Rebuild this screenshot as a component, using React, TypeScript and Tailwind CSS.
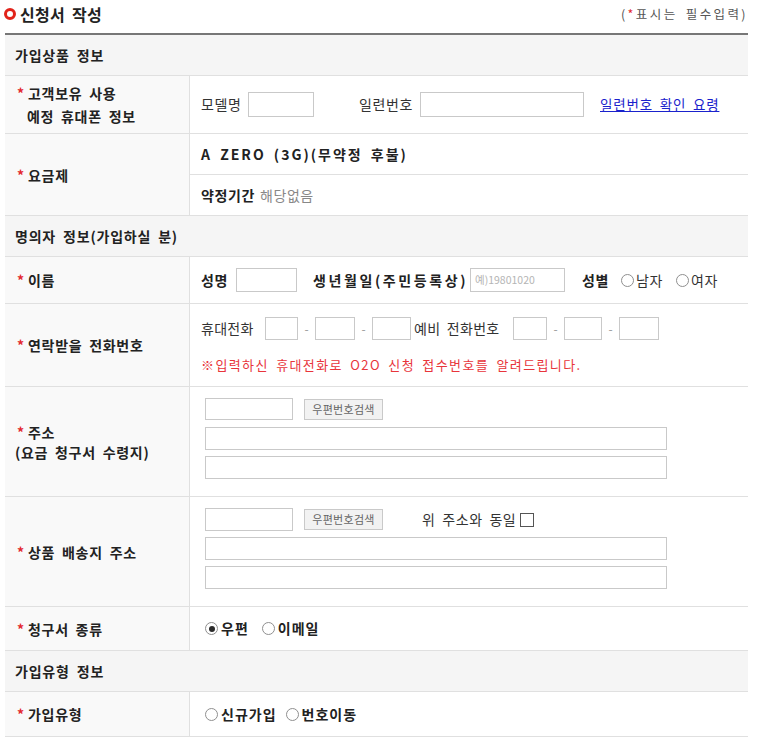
import React from "react";

function Box({ className = "", children }: { className?: string; children?: React.ReactNode }) {
  return <div className={`border border-[#c9c9c9] bg-white shrink-0 ${className}`}>{children}</div>;
}

function Radio({ checked = false }: { checked?: boolean }) {
  return (
    <span className="inline-flex w-[13px] h-[13px] rounded-full border border-[#8f8f8f] bg-white items-center justify-center shrink-0">
      {checked && <span className="w-[6px] h-[6px] rounded-full bg-[#2a2a2a]" />}
    </span>
  );
}

function Star() {
  return <span className="inline-block w-[11px] text-[#e3282f]">*</span>;
}

function Header({ children }: { children: React.ReactNode }) {
  return (
    <div className="h-[41px] bg-[#f5f5f5] border-b border-[#e0e0e0] flex items-center pl-[10px] text-[14px] font-bold tracking-[0.8px] text-[#222]">
      {children}
    </div>
  );
}

function Row({ h, label, children }: { h: string; label: React.ReactNode; children: React.ReactNode }) {
  return (
    <div className={`flex border-b border-[#e0e0e0] ${h}`}>
      <div className="w-[185px] shrink-0 bg-[#f9f9f9] border-r border-[#e0e0e0] flex items-center pl-[12px] text-[14px] font-bold tracking-[0.7px] leading-[20px] text-[#222]">
        {label}
      </div>
      <div className="flex-1 min-w-0">{children}</div>
    </div>
  );
}

function Dash() {
  return <span className="w-[17px] text-center text-[#999] text-[12px] tracking-[0px]">-</span>;
}

function PostButton() {
  return (
    <div className="ml-[11px] w-[79px] h-[21px] border border-[#c9c9c9] bg-[#f2f2f2] flex items-center justify-center text-[11px] text-[#666] tracking-[0.3px]">
      우편번호검색
    </div>
  );
}

export default function App() {
  return (
    <div className="w-[760px] h-[752px] bg-white text-[#333] whitespace-nowrap font-['Noto_Sans_CJK_KR',sans-serif] [word-spacing:3px]">
      {/* title */}
      <div className="h-[33px] flex items-start justify-between pt-[3px]">
        <div className="flex items-center pl-[4px]">
          <span className="w-[12px] h-[12px] rounded-full border-[3px] border-[#e2231a] mr-[4px]" />
          <span className="text-[16px] font-bold tracking-[0.3px] text-[#222] leading-[22px]">신청서 작성</span>
        </div>
        <div className="pr-[12px] pt-[3px] text-[12.5px] tracking-[2.4px] text-[#555] leading-[16px]">
          (<span className="text-[#e3282f]">*</span>표시는 필수입력)
        </div>
      </div>

      <div className="ml-[5px] w-[743px] border-t-2 border-[#777]">
        <Header>가입상품 정보</Header>

        <Row
          h="h-[58px]"
          label={
            <div className="leading-[23px]">
              <div>
                <Star />
                고객보유 사용
              </div>
              <div className="pl-[10px]">예정 휴대폰 정보</div>
            </div>
          }
        >
          <div className="h-full flex items-center pl-[11px] text-[14px] tracking-[0.6px]">
            <span className="w-[44px] shrink-0">모델명</span>
            <Box className="ml-[3px] w-[66px] h-[25px]" />
            <span className="ml-[45px] w-[57px] shrink-0">일련번호</span>
            <Box className="ml-[4px] w-[164px] h-[25px]" />
            <a className="ml-[16px] text-[#1a22cc] underline text-[13.5px] tracking-[0.8px]">일련번호 확인 요령</a>
          </div>
        </Row>

        <Row
          h="h-[82px]"
          label={
            <div>
              <Star />
              요금제
            </div>
          }
        >
          <div className="h-full flex flex-col">
            <div className="h-[41px] border-b border-[#e0e0e0] flex items-center pl-[11px] text-[14px] font-bold tracking-[2px] text-[#222]">
              A ZERO (3G)(무약정 후불)
            </div>
            <div className="flex-1 flex items-center pl-[11px] text-[14px] tracking-[0.6px]">
              <span className="font-bold text-[#222]">약정기간</span>
              <span className="ml-[5px] text-[#888]">해당없음</span>
            </div>
          </div>
        </Row>

        <Header>명의자 정보(가입하실 분)</Header>

        <Row
          h="h-[47px]"
          label={
            <div>
              <Star />
              이름
            </div>
          }
        >
          <div className="h-full flex items-center pl-[11px] text-[14px] tracking-[0.6px]">
            <span className="font-bold text-[#222] w-[28px] shrink-0">성명</span>
            <Box className="ml-[7px] w-[61px] h-[24px]" />
            <span className="ml-[16px] w-[157px] shrink-0 font-bold text-[#222] tracking-[2.6px]">생년월일(주민등록상)</span>
            <Box className="w-[95px] h-[24px] flex items-center pl-[4px]">
              <span className="text-[10.5px] text-[#b5b5b5] tracking-[0px]">예)19801020</span>
            </Box>
            <span className="ml-[17px] w-[28px] shrink-0 font-bold text-[#222]">성별</span>
            <span className="ml-[11px] flex">
              <Radio />
            </span>
            <span className="ml-[2px]">남자</span>
            <span className="ml-[13px] flex">
              <Radio />
            </span>
            <span className="ml-[2px]">여자</span>
          </div>
        </Row>

        <Row
          h="h-[83px]"
          label={
            <div>
              <Star />
              연락받을 전화번호
            </div>
          }
        >
          <div className="h-full flex flex-col justify-center pl-[11px] text-[14px] tracking-[0.3px]">
            <div className="flex items-center">
              <span className="w-[56px] shrink-0">휴대전화</span>
              <Box className="ml-[8px] w-[33px] h-[23px]" />
              <Dash />
              <Box className="w-[40px] h-[23px]" />
              <Dash />
              <Box className="w-[39px] h-[23px]" />
              <span className="ml-[3px] w-[91px] shrink-0">예비 전화번호</span>
              <Box className="ml-[8px] w-[34px] h-[23px]" />
              <Dash />
              <Box className="w-[38px] h-[23px]" />
              <Dash />
              <Box className="w-[40px] h-[23px]" />
            </div>
            <div className="mt-[16px] text-[#e8353b] text-[13px] tracking-[1.4px] leading-[17px]">
              ※입력하신 휴대전화로 O2O 신청 접수번호를 알려드립니다.
            </div>
          </div>
        </Row>

        <Row
          h="h-[110px]"
          label={
            <div className="leading-[20px]">
              <div>
                <Star />
                주소
              </div>
              <div className="-ml-[2px]">(요금 청구서 수령지)</div>
            </div>
          }
        >
          <div className="h-full flex flex-col pl-[15px] pt-[11px]">
            <div className="flex items-center">
              <Box className="w-[88px] h-[22px]" />
              <PostButton />
            </div>
            <Box className="mt-[7px] w-[462px] h-[23px]" />
            <Box className="mt-[6px] w-[462px] h-[23px]" />
          </div>
        </Row>

        <Row
          h="h-[110px]"
          label={
            <div>
              <Star />
              상품 배송지 주소
            </div>
          }
        >
          <div className="h-full flex flex-col pl-[15px] pt-[11px]">
            <div className="flex items-center">
              <Box className="w-[88px] h-[23px]" />
              <PostButton />
              <span className="ml-[39px] text-[14px] tracking-[0.6px]">위 주소와 동일</span>
              <span className="ml-[4px] w-[14px] h-[14px] border border-[#555] bg-white shrink-0" />
            </div>
            <Box className="mt-[6px] w-[462px] h-[23px]" />
            <Box className="mt-[6px] w-[462px] h-[23px]" />
          </div>
        </Row>

        <Row
          h="h-[44px]"
          label={
            <div>
              <Star />
              청구서 종류
            </div>
          }
        >
          <div className="h-full flex items-center pl-[15px] text-[14px] tracking-[1px] font-bold text-[#222]">
            <Radio checked />
            <span className="ml-[3px]">우편</span>
            <span className="ml-[13px] flex">
              <Radio />
            </span>
            <span className="ml-[3px]">이메일</span>
          </div>
        </Row>

        <Header>가입유형 정보</Header>

        <Row
          h="h-[45px]"
          label={
            <div>
              <Star />
              가입유형
            </div>
          }
        >
          <div className="h-full flex items-center pl-[15px] text-[14px] tracking-[1px] font-bold text-[#222]">
            <Radio />
            <span className="ml-[3px]">신규가입</span>
            <span className="ml-[9px] flex">
              <Radio />
            </span>
            <span className="ml-[3px]">번호이동</span>
          </div>
        </Row>
      </div>
    </div>
  );
}
